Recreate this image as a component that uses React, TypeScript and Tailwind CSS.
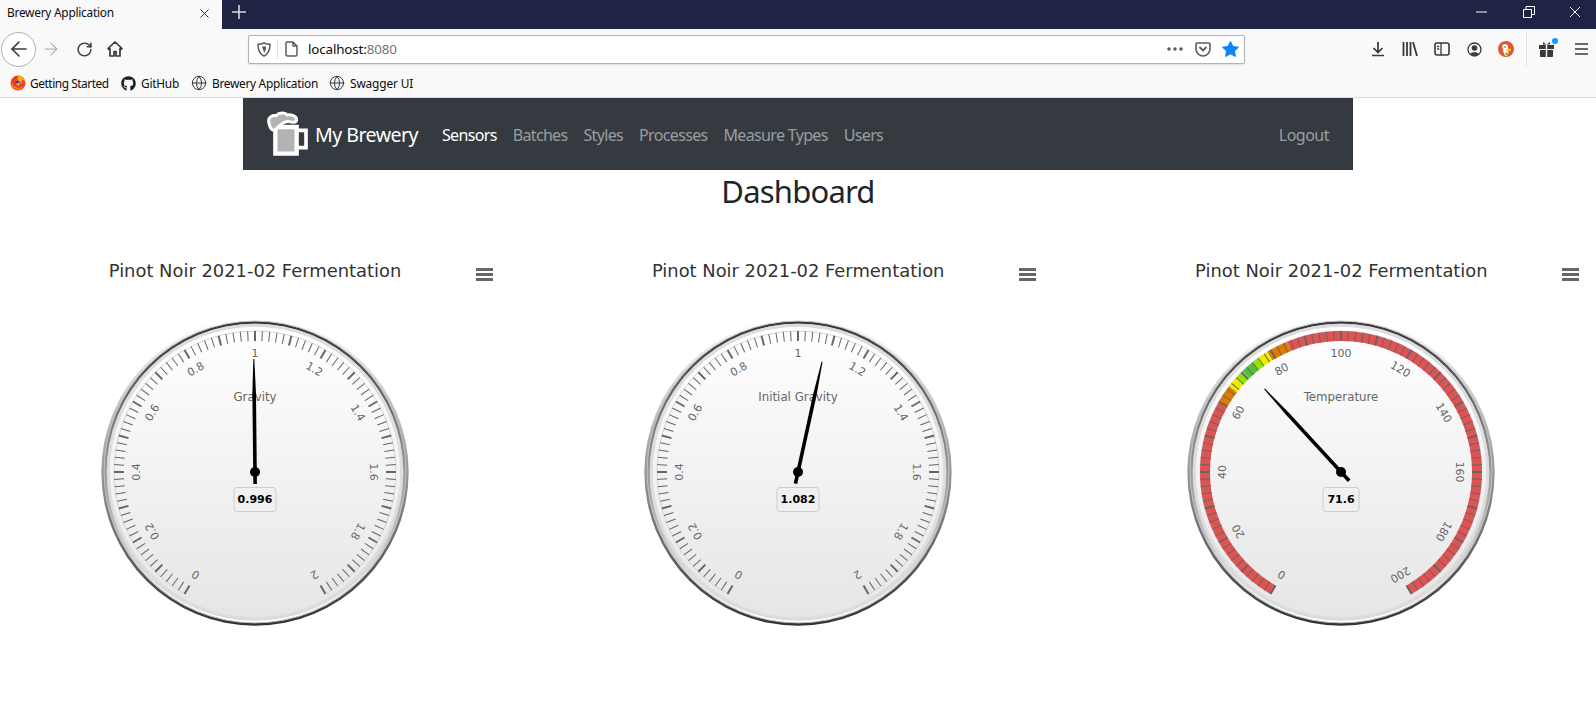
import { ArrowLeft, ArrowRight, Globe, RotateCw, X } from "lucide-react";
import { FaGithub } from "react-icons/fa";

const UI_FONT = "font-['Noto_Sans',sans-serif]";

type Band = { from: number; to: number; color: string };

type GaugeProps = {
  id: string;
  title: string;
  min: number;
  max: number;
  value: number;
  label: string;
  bands?: Band[];
  boxWidth: number;
};

const RED = "#df5353";
const ORANGE = "#e07b00";
const YELLOW = "#f0ec00";
const LIME = "#8fe800";
const GREEN = "#55bf3b";

const temperatureBands: Band[] = [
  { from: 0, to: 60, color: RED },
  { from: 60, to: 65, color: ORANGE },
  { from: 65, to: 68, color: YELLOW },
  { from: 68, to: 70.5, color: LIME },
  { from: 70.5, to: 74, color: GREEN },
  { from: 74, to: 76, color: LIME },
  { from: 76, to: 79, color: YELLOW },
  { from: 79, to: 85, color: ORANGE },
  { from: 85, to: 200, color: RED },
];

const CX = 255;
const CY = 160;
const R = 141;

function point(r: number, deg: number) {
  const a = (deg * Math.PI) / 180;
  return [CX + r * Math.sin(a), CY - r * Math.cos(a)];
}

function Gauge({ id, title, min, max, value, label, bands, boxWidth }: GaugeProps) {
  const toAngle = (v: number) => -150 + ((v - min) / (max - min)) * 300;
  const needle = toAngle(value);
  const ticks = Array.from({ length: 101 }, (_, i) => i);
  const labels = Array.from({ length: 11 }, (_, i) => i);

  return (
    <svg width="510" height="320" className="block font-['DejaVu_Sans',sans-serif]">
      <defs>
        <linearGradient id={`${id}-a`} x1="0" y1="0" x2="0" y2="1">
          <stop offset="0" stopColor="#ffffff" />
          <stop offset="1" stopColor="#333333" />
        </linearGradient>
        <linearGradient id={`${id}-b`} x1="0" y1="0" x2="0" y2="1">
          <stop offset="0" stopColor="#333333" />
          <stop offset="1" stopColor="#ffffff" />
        </linearGradient>
        <linearGradient id={`${id}-c`} x1="0" y1="0" x2="0" y2="1">
          <stop offset="0" stopColor="#ffffff" />
          <stop offset="1" stopColor="#e6e6e6" />
        </linearGradient>
      </defs>
      <circle cx={CX} cy={CY} r="153.7" fill={`url(#${id}-a)`} />
      <circle cx={CX} cy={CY} r="150.9" fill={`url(#${id}-b)`} stroke="#c0c0c0" />
      <circle cx={CX} cy={CY} r="148" fill={`url(#${id}-c)`} stroke="#cccccc" />
      <circle cx={CX} cy={CY} r="146.5" fill="none" stroke="#dddddd" strokeWidth="3" />
      <circle cx={CX} cy={CY} r="145" fill={`url(#${id}-c)`} />

      <path
        d={`M ${point(R, -150).join(" ")} A ${R} ${R} 0 1 1 ${point(R, 150).join(" ")}`}
        fill="none"
        stroke="#ccd6eb"
      />

      {bands?.map((b) => {
        const [x1, y1] = point(136, toAngle(b.from));
        const [x2, y2] = point(136, toAngle(b.to));
        const large = toAngle(b.to) - toAngle(b.from) > 180 ? 1 : 0;
        return (
          <path
            key={b.from}
            d={`M ${x1} ${y1} A 136 136 0 ${large} 1 ${x2} ${y2}`}
            fill="none"
            stroke={b.color}
            strokeWidth="10"
          />
        );
      })}

      {ticks.map((i) => {
        const major = i % 5 === 0;
        return (
          <line
            key={i}
            x1={CX}
            y1={CY - R}
            x2={CX}
            y2={CY - R + 10}
            stroke="#666666"
            strokeWidth={major ? 2 : 1}
            transform={`rotate(${-150 + i * 3} ${CX} ${CY})`}
          />
        );
      })}

      {labels.map((i) => {
        const a = -150 + i * 30;
        const [x, y] = point(119, a);
        const v = min + ((max - min) * i) / 10;
        return (
          <text
            key={i}
            x={x}
            y={y + 4}
            textAnchor="middle"
            fontSize="11"
            fill="#666666"
            transform={`rotate(${a} ${x} ${y})`}
          >
            {Number(v.toFixed(1))}
          </text>
        );
      })}

      <text x={CX} y={CY - 71} textAnchor="middle" fontSize="11.8" fill="#666666">
        {label}
      </text>

      <g transform={`rotate(${needle} ${CX} ${CY})`}>
        <path
          d={`M ${CX - 1.8} ${CY + 12} L ${CX - 1.8} ${CY - 79} L ${CX - 0.5} ${CY - 113} L ${CX + 0.5} ${CY - 113} L ${CX + 1.8} ${CY - 79} L ${CX + 1.8} ${CY + 12} Z`}
          fill="#000000"
        />
      </g>
      <circle cx={CX} cy={CY} r="5" fill="#000000" />

      <rect
        x={CX - boxWidth / 2}
        y={CY + 15.5}
        width={boxWidth}
        height="24"
        rx="3"
        fill="#f0f0f0"
        stroke="#cccccc"
      />
      <text x={CX} y={CY + 31} textAnchor="middle" fontSize="11" fontWeight="700" fill="#000000">
        {title}
      </text>
    </svg>
  );
}

function Chart(props: GaugeProps) {
  return (
    <div className="relative w-[510px] shrink-0">
      <div className="flex h-[54px] items-start justify-center font-['DejaVu_Sans',sans-serif] text-[17.9px] leading-[26px] text-[#333333]">
        Pinot Noir 2021-02 Fermentation
      </div>
      <svg width="18" height="15" className="absolute left-[475px] top-[9px]">
        <path d="M1 2.5H18M1 7.5H18M1 12.5H18" stroke="#666666" strokeWidth="3" />
      </svg>
      <Gauge {...props} />
    </div>
  );
}

function BeerLogo() {
  return (
    <svg width="50" height="54" viewBox="0 0 150 162" className="-mt-[3px] shrink-0">
      <path d="M40 60H104V140H40Z" fill="#b3b3b3" stroke="#ffffff" strokeWidth="13" />
      <path d="M104 70H132V122H104" fill="none" stroke="#ffffff" strokeWidth="11" />
      <path
        d="M20 45C18 30 32 24 42 26C52 16 70 16 76 24C86 22 104 26 104 38C104 46 92 48 82 44C72 42 62 48 52 56C44 64 38 74 30 68C24 62 22 56 20 45Z"
        fill="#b3b3b3"
        stroke="#ffffff"
        strokeWidth="9"
      />
    </svg>
  );
}

function FirefoxLogo() {
  return (
    <svg width="16" height="16" viewBox="0 0 16 16" className="-mr-px shrink-0">
      <circle cx="8" cy="8" r="7.5" fill="#e8412e" />
      <path d="M8 1C12 1 15.500 4 15.500 8.500C15 5.500 13 4.500 11.500 4.500C12.500 6.500 12 9 10 10C8 11 5.500 10 5.500 8C7 8.500 9 7.500 8 6C7 5 8 3 8 1Z" fill="#ffb000" />
      <path d="M1 9C2 13 5.500 14.500 8 14.500C11 14.500 13 12.500 13.500 10.500C12 12.500 9.500 13 7.500 12.500C5 12 3 10.500 2.500 8Z" fill="#ff7a00" />
      <circle cx="8" cy="8.500" r="2.800" fill="#5b2a9d" />
      <path d="M5.500 8C7 8.800 9.500 8 9.500 6.500C10.800 8 10.500 10 9 10.800C7.500 11.500 5.500 10 5.500 8Z" fill="#ff9500" />
    </svg>
  );
}

function Bookmark({ icon, label, className, tracking }: { icon: React.ReactNode; label: string; className: string; tracking: string }) {
  return (
    <div className={`flex items-center gap-[5px] ${className}`}>
      {icon}
      <span className={`whitespace-nowrap ${tracking}`}>{label}</span>
    </div>
  );
}

function ToolIcon({ className, children }: { className: string; children: React.ReactNode }) {
  return <div className={`flex shrink-0 items-center justify-center ${className}`}>{children}</div>;
}

function BrowserChrome() {
  return (
    <div className={`shrink-0 bg-[#f9f9fa] text-[#0c0c0d] ${UI_FONT}`}>
      <div className="flex h-[29px] items-center bg-[#1f2344]">
        <div className="flex h-full w-[222px] items-center justify-between bg-[#f9f9fa] pb-[3px] pl-[7px] pr-[10px] text-[11.9px] tracking-[-0.25px]">
          <span>Brewery Application</span>
          <X size={15} strokeWidth={1.6} className="text-[#333333]" />
        </div>
        <svg width="14" height="14" className="mb-[5px] ml-[10px]">
          <path d="M7 0V14M0 7H14" stroke="#d7d7db" strokeWidth="1.600" />
        </svg>
        <div className="mb-[6px] ml-auto flex items-center">
          <svg width="12" height="12">
            <path d="M0 6H11" stroke="#ffffff" />
          </svg>
          <svg width="12" height="12" className="ml-[35px]">
            <path d="M0.500 3.500H8.500V11.500H0.500ZM3 3V0.500H11.500V8.500H9" fill="none" stroke="#ffffff" />
          </svg>
          <svg width="12" height="12" className="ml-[34px] mr-[15px]">
            <path d="M1 1L11 11M11 1L1 11" stroke="#ffffff" />
          </svg>
        </div>
      </div>

      <div className="flex h-[40px] items-center">
        <ToolIcon className="ml-px h-[35px] w-[35px] rounded-full border border-[#b1b1b3] bg-white">
          <ArrowLeft size={24} strokeWidth={1.6} className="text-[#38383d]" />
        </ToolIcon>
        <ToolIcon className="ml-[5px] w-[20px]">
          <ArrowRight size={24} strokeWidth={1.5} className="text-[#b1b1b3]" />
        </ToolIcon>
        <ToolIcon className="ml-[14px] w-[18px]">
          <RotateCw size={17} strokeWidth={2.1} className="text-[#38383d]" />
        </ToolIcon>
        <ToolIcon className="ml-[13px] w-[18px]">
          <svg width="16" height="16" viewBox="0 0 16 16">
            <path d="M8 1L1 7.500L2 8.500L3 7.700V15H7V10.500H9V15H13V7.700L14 8.500L15 7.500Z" fill="none" stroke="#38383d" strokeWidth="1.700" strokeLinejoin="round" />
          </svg>
        </ToolIcon>

        <div className="ml-[124px] flex h-[29px] w-[997px] items-center rounded-[2px] border border-[#b1b1b3] bg-white shadow-[0_1px_2px_rgba(0,0,0,0.1)]">
          <svg width="14" height="15" viewBox="0 0 14 15" className="ml-[8px]">
            <path d="M7 1C9 2 11 2.300 13 2.300C13 8 11.500 12 7 14C2.500 12 1 8 1 2.300C3 2.300 5 2 7 1Z" fill="none" stroke="#5b5b66" strokeWidth="1.500" />
            <path d="M5 4.500H9V7L7.500 10.500H7Z" fill="#5b5b66" />
          </svg>
          <div className="ml-[6px] h-[20px] w-px bg-[#e1e1e2]" />
          <svg width="13" height="16" viewBox="0 0 13 16" className="ml-[7px]">
            <path d="M2 1H8L12 5V13.500C12 14.300 11.500 15 10.500 15H2.500C1.500 15 1 14.300 1 13.500V2C1 1.400 1.400 1 2 1ZM8 1V5H12" fill="none" stroke="#5b5b66" strokeWidth="1.500" strokeLinejoin="round" />
          </svg>
          <span className="ml-[10px] text-[13.4px] tracking-[-0.15px]">
            localhost:<span className="text-[#737373]">8080</span>
          </span>
          <div className="ml-auto flex items-center">
            <svg width="16" height="4">
              <circle cx="2" cy="2" r="1.800" fill="#5b5b66" />
              <circle cx="8" cy="2" r="1.800" fill="#5b5b66" />
              <circle cx="14" cy="2" r="1.800" fill="#5b5b66" />
            </svg>
            <svg width="16" height="15" viewBox="0 0 16 15" className="ml-[12px]">
              <path d="M2 1H14C14.600 1 15 1.400 15 2V7C15 11 11.500 14 8 14C4.500 14 1 11 1 7V2C1 1.400 1.400 1 2 1Z" fill="none" stroke="#5b5b66" strokeWidth="1.600" />
              <path d="M5 5.500L8 8.500L11 5.500" fill="none" stroke="#5b5b66" strokeWidth="1.800" strokeLinecap="round" />
            </svg>
            <svg width="17" height="16" viewBox="0 0 17 16" className="ml-[11px] mr-[5px]">
              <path d="M8.500 0.500L11 5.500L16.500 6.200L12.500 10L13.500 15.500L8.500 12.800L3.500 15.500L4.500 10L0.500 6.200L6 5.500Z" fill="#0a84ff" stroke="#0a84ff" strokeLinejoin="round" />
            </svg>
          </div>
        </div>

        <svg width="14" height="16" viewBox="0 0 14 16" className="ml-[126px]">
          <path d="M7 1V11M2.500 7L7 11.500L11.500 7M1 14.500H13" fill="none" stroke="#38383d" strokeWidth="1.700" />
        </svg>
        <svg width="16" height="14" viewBox="0 0 16 14" className="ml-[17px]">
          <path d="M1.500 0V14M5 0V14M8.500 0V14M11 0L15 14" fill="none" stroke="#38383d" strokeWidth="1.800" />
        </svg>
        <svg width="16" height="14" viewBox="0 0 16 14" className="ml-[16px]">
          <rect x="1" y="1" width="14" height="12" rx="2" fill="none" stroke="#38383d" strokeWidth="1.600" />
          <path d="M7 1V13M3.200 4.500H5.200M3.200 7H5.200" stroke="#38383d" strokeWidth="1.300" />
        </svg>
        <svg width="15" height="15" viewBox="0 0 15 15" className="ml-[17px]">
          <circle cx="7.500" cy="7.500" r="6.500" fill="none" stroke="#38383d" strokeWidth="1.300" />
          <circle cx="7.500" cy="6" r="2.800" fill="#38383d" />
          <path d="M3 12C4 9.800 11 9.800 12 12L7.500 14Z" fill="#38383d" />
        </svg>
        <svg width="16" height="16" viewBox="0 0 16 16" className="ml-[16px]">
          <circle cx="8" cy="8" r="8" fill="#de5833" />
          <path d="M4 5C5 2.500 9 2.500 10 5L10.500 13.500L8 15C5 13 5.500 9 4 5Z" fill="#ffffff" />
          <path d="M8 8.500L13 7.500L13 9.500L8.500 10.500Z" fill="#fdd20a" />
          <path d="M7 11L10.500 12.500L10 14.500L7.500 13.500Z" fill="#65bc46" />
          <circle cx="7" cy="6" r="0.800" fill="#2d4f8e" />
        </svg>
        <div className="ml-[12px] h-[34px] w-px bg-[#e1e1e2]" />
        <div className="relative ml-[12px] h-[16px] w-[15px]">
          <svg width="15" height="16" viewBox="0 0 15 16">
            <path d="M0 4H6.800V8H0ZM8.200 4H15V8H8.200ZM1 9H6.800V16H2C1.400 16 1 15.600 1 15ZM8.200 9H14V15C14 15.600 13.600 16 13 16H8.200ZM4 1L7.500 3.500L11 1V3.500H4Z" fill="#38383d" />
          </svg>
          <div className="absolute -right-[4px] -top-[3px] h-[6px] w-[6px] rounded-full bg-[#0a9bff]" />
        </div>
        <svg width="13" height="12" className="ml-[21px]">
          <path d="M0 1H13M0 6H13M0 11H13" stroke="#38383d" strokeWidth="1.500" />
        </svg>
      </div>

      <div className="flex h-[29px] items-center border-b border-[#dcdcde] pt-[1px] text-[11.9px]">
        <Bookmark icon={<FirefoxLogo />} label="Getting Started" className="ml-[10px] w-[111px]" tracking="tracking-[-0.45px]" />
        <Bookmark icon={<FaGithub size={15} className="shrink-0 text-[#1b1f23]" />} label="GitHub" className="w-[70px]" tracking="tracking-[-0.25px]" />
        <Bookmark icon={<Globe size={16} strokeWidth={1.5} className="shrink-0 text-[#38383d]" />} label="Brewery Application" className="w-[138px]" tracking="tracking-[-0.3px]" />
        <Bookmark icon={<Globe size={16} strokeWidth={1.5} className="shrink-0 text-[#38383d]" />} label="Swagger UI" className="w-[90px]" tracking="tracking-[-0.15px]" />
      </div>
    </div>
  );
}

const links = [
  { label: "Sensors", active: true, className: "ml-[24px]" },
  { label: "Batches", active: false, className: "ml-[16px]" },
  { label: "Styles", active: false, className: "ml-[16px]" },
  { label: "Processes", active: false, className: "ml-[16px]" },
  { label: "Measure Types", active: false, className: "ml-[16px]" },
  { label: "Users", active: false, className: "ml-[16px]" },
];

function NavBar() {
  return (
    <nav className={`mx-auto flex h-[72px] w-[1110px] shrink-0 items-center bg-[#343a40] pl-[19px] pr-[24px] pt-[2px] ${UI_FONT}`}>
      <BeerLogo />
      <span className="ml-[3px] text-[19.6px] tracking-[-0.55px] text-white">My Brewery</span>
      {links.map((link) => (
        <a key={link.label} className={`${link.className} text-[16px] tracking-[-0.66px] ${link.active ? "text-white" : "text-[#ffffff80]"}`}>
          {link.label}
        </a>
      ))}
      <a className="ml-auto text-[16px] tracking-[-0.5px] text-[#ffffff80]">Logout</a>
    </nav>
  );
}

export default function App() {
  return (
    <div className="flex h-[718px] w-[1596px] flex-col overflow-hidden bg-white">
      <BrowserChrome />
      <NavBar />
      <h2 className={`h-[46px] text-center text-[31px] leading-[42px] tracking-[-0.8px] text-[#212529] ${UI_FONT}`}>
        Dashboard
      </h2>
      <div className="mt-[42px] flex gap-[33.2px]">
        <Chart id="g1" title="0.996" label="Gravity" min={0} max={2} value={0.996} boxWidth={42} />
        <Chart id="g2" title="1.082" label="Initial Gravity" min={0} max={2} value={1.082} boxWidth={42} />
        <Chart id="g3" title="71.6" label="Temperature" min={0} max={200} value={71.6} bands={temperatureBands} boxWidth={36} />
      </div>
    </div>
  );
}
